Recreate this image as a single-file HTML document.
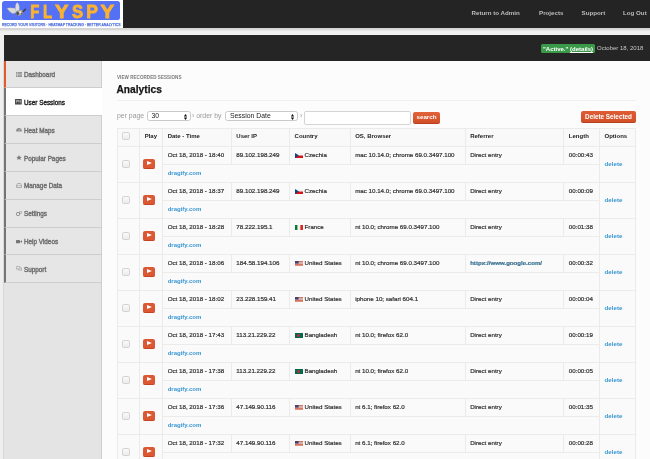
<!DOCTYPE html>
<html><head><meta charset="utf-8">
<style>
*{box-sizing:border-box}
html,body{margin:0;padding:0}
body{width:650px;height:459px;overflow:hidden;position:relative;background:#fcfcfc;font-family:"Liberation Sans",sans-serif;color:#333}
.abs{position:absolute}
#top{left:0;top:0;width:650px;height:27.5px;background:#242424}
#logobg{left:0;top:0;width:122.5px;height:27.5px;background:#fff}
#logo{left:1.5px;top:1px;width:118.5px;height:18.5px;background:#5470f4;border-radius:2.5px}
#logotxt{left:30px;top:1.5px;font-size:17.5px;font-weight:bold;color:#fab33a;letter-spacing:4.2px;line-height:18px}
#tag{left:1.9px;top:22.6px;font-size:4.1px;font-weight:normal;color:#4d6ddc;-webkit-text-stroke:0.25px #4d6ddc;white-space:nowrap;line-height:4px;transform:scaleX(0.852);transform-origin:0 0}
.nav{top:9px;font-size:6.2px;font-weight:bold;color:#bdbdbd;white-space:nowrap;line-height:8px}
#band{left:0;top:27.5px;width:650px;height:7.5px;background:linear-gradient(#d3d3d3 0,#d9d9d9 28%,#eeeeee 40%,#f3f3f3 100%)}
#lstrip{left:0;top:35px;width:4px;height:424px;background:#efefef}
#dark{left:4px;top:35px;width:646px;height:25.5px;background:#252525}
#badge{left:541px;top:43.8px;width:54px;height:9px;background:#3b9a49;border-radius:1.5px;color:#fff;font-size:6px;font-weight:bold;line-height:10.3px;padding-left:2px;white-space:nowrap}
#badge u{text-decoration:underline}
#date{left:597px;top:43.5px;font-size:6px;color:#c8c8c8;white-space:nowrap;line-height:8px}
#side{left:3px;top:60.5px;width:99px;height:400px;background:#e4e4e4;border-right:1px solid #cfcfcf;border-left:1px solid #d9d9d9}
.it{position:absolute;left:4px;width:98px;height:27.85px;background:#e6e6e6;border-bottom:1px solid #cdcdcd;border-right:1px solid #cfcfcf;border-left:2px solid #757575}
.it .tx{position:absolute;left:18px;top:10.6px;font-size:6.35px;font-weight:normal;color:#6f6f6f;-webkit-text-stroke:0.4px #707070;white-space:nowrap;line-height:8px}
.it.act{background:#fff;border-right:none}
.it.act .tx{color:#222;-webkit-text-stroke:0.35px #222}
.it.dash{border-left-color:#e05a2e}
.ic{position:absolute;left:10px;top:11px;width:6px;height:5px}
#view{left:117px;top:75.3px;font-size:4.55px;font-weight:bold;color:#7a7a7a;white-space:nowrap;line-height:5px;letter-spacing:0.05px}
#h1{left:116.5px;top:83.4px;font-size:10.2px;font-weight:bold;color:#151515;-webkit-text-stroke:0.25px #151515;white-space:nowrap;line-height:14px}
#hr{left:117px;top:100px;width:519px;height:1px;background:#f0f0f0}
.lbl{top:112px;font-size:6.9px;color:#9a9a9a;white-space:nowrap;line-height:8px}
.sel{top:111px;height:10px;border:1px solid #c9c9c9;border-radius:2.5px;background:#fff;font-size:6.85px;color:#222;line-height:8.5px;padding-left:4px;white-space:nowrap}
.arr{position:absolute;right:3px;top:1.5px;width:3px;height:6px}
#inp{left:304px;top:110.5px;width:107px;height:14.5px;border:1px solid #d4d4d4;border-radius:2px;background:#fff}
#sbtn{left:413px;top:112.3px;width:27px;height:11.5px;background:linear-gradient(#e2633a,#d14f28);border-bottom:1px solid #b8401f;border-radius:2px;color:#fff;font-size:6.2px;font-weight:bold;text-align:center;line-height:10px}
#dbtn{left:581px;top:110.8px;width:55px;height:12px;background:linear-gradient(#df5c33,#d24f28);border-bottom:1px solid #b4401e;border-radius:2px;color:#fff;font-size:6.35px;font-weight:bold;text-align:center;line-height:11px;white-space:nowrap}
#tbl{position:absolute;left:116.7px;top:127.6px;width:518.1px;border-collapse:collapse;table-layout:fixed}
#tbl td,#tbl th{border:1px solid #ebebeb;padding:0 0 0 4.6px;font-size:6px;white-space:nowrap;overflow:hidden;text-align:left;vertical-align:middle}
#tbl th{height:18px;font-weight:bold;color:#222;background:#f9f9f9;padding-bottom:2.2px}
#tbl tr.m td{height:18px;color:#333;font-size:6.2px;padding-bottom:0.8px}
#tbl tr.s td{height:18px}
#tbl tbody tr:nth-child(4n+1) td,#tbl tbody tr:nth-child(4n+2) td{background:#fafafa}
#tbl tbody tr:nth-child(4n+3) td,#tbl tbody tr:nth-child(4n+4) td{background:#fafafa}
#tbl td.dom{border-top-color:#efefef}
.dt,.ip,.co,.os,.rf,.ln{-webkit-text-stroke:0.2px #2e2e2e;color:#2e2e2e}
.lnk{color:#3b97d3;font-weight:bold}
#tbl td.dt,#tbl td.ip,#tbl td.ln{font-size:6px}#tbl td.co{font-size:6.35px}#tbl td.os{font-size:6.2px}#tbl td.rf{font-size:6.55px}#tbl td.rf .lnk{font-size:6.1px}#tbl td.op{font-size:6.1px}
.cb{display:inline-block;width:7.7px;height:7.7px;border:1px solid #d3d3d3;border-radius:1.8px;background:linear-gradient(#fafafa,#ececec);margin-left:0px;vertical-align:middle}
.pl{display:inline-block;width:11.5px;height:10px;border-radius:2px;background:#dc5832;border-bottom:1.8px solid #c4421f;position:relative;vertical-align:middle;margin-left:-1.3px}
.pl:after{content:"";position:absolute;left:3.8px;top:2.1px;border-left:5px solid #fff;border-top:2.5px solid transparent;border-bottom:2.5px solid transparent}
.fl{vertical-align:-0.5px;margin-right:2px}
th .cb{display:inline-block;width:7.7px;height:7.7px;border:1px solid #d3d3d3;border-radius:1.8px;background:linear-gradient(#fafafa,#ececec);margin-left:0px;vertical-align:middle}
</style></head><body><div id="wrap" style="position:absolute;left:0;top:0;width:650px;height:459px;will-change:transform">
<div id="top" class="abs"></div>
<div id="logobg" class="abs"></div>
<div id="logo" class="abs"></div>
<svg class="abs" style="left:0;top:0" width="122" height="21" viewBox="0 0 122 21">
<path d="M7 8.2Q10 7.2 15.6 8.4L16.2 12.2Q13.5 14 12.2 13.4Q9 11.5 7 8.2Z" fill="#d9d9d6" stroke="#a5a5a5" stroke-width="0.3"/>
<path d="M17.3 2.6Q19.4 4 19.4 8.5Q19.2 11.6 17.4 11.6Q15.3 11.4 15.4 7.5Q15.6 3.2 17.3 2.6Z" fill="#dedede" stroke="#a5a5a5" stroke-width="0.3"/>
<ellipse cx="19.6" cy="12.8" rx="3.9" ry="2.6" fill="#a9a9a9" transform="rotate(-15 19.6 12.8)"/>
<ellipse cx="17.6" cy="13.4" rx="1.3" ry="1.8" fill="#4d4d4d"/>
<ellipse cx="20.4" cy="12.3" rx="1.2" ry="1" fill="#e8e8e8"/>
<ellipse cx="21.8" cy="13.6" rx="0.9" ry="1.2" fill="#666"/>
<path d="M23 11.8L25.4 9.3" stroke="#3d3d3d" stroke-width="1.5" stroke-linecap="round"/>
<path d="M14.5 14.2L11.8 17.3M16.2 14.6L15.6 17M10.5 12.2L8.2 13.4" stroke="#8c8c9c" stroke-width="0.35"/>
<g fill="#fab232" stroke="#fab232" stroke-width="4.5" font-family="Liberation Sans" font-weight="bold" font-size="100">
<text transform="translate(30.23,17.90) scale(0.1490,0.1899)">F</text>
<text transform="translate(42.93,17.90) scale(0.1495,0.1899)">L</text>
<text transform="translate(55.00,17.90) scale(0.2016,0.1899)">Y</text>
<text transform="translate(72.10,17.91) scale(0.1667,0.1901)">S</text>
<text transform="translate(86.36,17.90) scale(0.1754,0.1899)">P</text>
<text transform="translate(100.39,17.90) scale(0.2048,0.1899)">Y</text>
</g>
</svg>
<div id="tag" class="abs">RECORD YOUR VISITORS · HEATMAP TRACKING · BETTER ANALYTICS</div>
<div class="abs nav" style="left:471.5px">Return to Admin</div>
<div class="abs nav" style="left:539px">Projects</div>
<div class="abs nav" style="left:581.5px">Support</div>
<div class="abs nav" style="left:623px">Log Out</div>
<div id="band" class="abs"></div>
<div id="lstrip" class="abs"></div>
<div id="dark" class="abs"></div>
<div id="badge" class="abs">"Active." <u>(details)</u></div>
<div id="date" class="abs">October 18, 2018</div>
<div id="side" class="abs"></div>
<div class="it dash" style="top:60.50px"><svg class="ic" viewBox="0 0 6 5"><rect width="6" height="5" fill="#8a8a8a"/><path d="M0 1.2H6M0 2.5H6M0 3.8H6M1.5 0V5" stroke="#e6e6e6" stroke-width="0.45"/></svg><span class="tx">Dashboard</span></div>
<div class="it act" style="top:88.35px"><svg class="ic" style="left:9.2px;top:10.6px;width:6.7px;height:5.6px" viewBox="0 0 6.7 5.6"><rect width="6.7" height="5.6" rx="0.6" fill="#3a3a3a"/><rect x="0.8" y="0.8" width="5.1" height="4" fill="#9a9a9a"/><path d="M0.8 4.8L2.6 2.6L3.8 3.7L4.8 2.9L5.9 4.8Z" fill="#3a3a3a"/><circle cx="4.6" cy="1.7" r="0.5" fill="#3a3a3a"/></svg><span class="tx">User Sessions</span></div>
<div class="it" style="top:116.20px"><svg class="ic" viewBox="0 0 6 5"><path d="M0.3 4.5A2.8 2.8 0 1 1 5.7 4.5Z" fill="#8a8a8a"/><path d="M3 4L4 2" stroke="#e6e6e6" stroke-width="0.5"/></svg><span class="tx">Heat Maps</span></div>
<div class="it" style="top:144.05px"><svg class="ic" viewBox="0 0 6 5"><path d="M3 0L3.8 1.8L5.8 1.9L4.2 3.1L4.8 5L3 3.9L1.2 5L1.8 3.1L0.2 1.9L2.2 1.8Z" fill="#777"/></svg><span class="tx">Popular Pages</span></div>
<div class="it" style="top:171.90px"><svg class="ic" viewBox="0 0 6 5"><path d="M0.5 2.5L1.5 0.5H4.5L5.5 2.5V4.5H0.5Z" fill="none" stroke="#8a8a8a" stroke-width="0.6"/><path d="M0.5 2.7H5.5" stroke="#8a8a8a" stroke-width="0.5"/></svg><span class="tx">Manage Data</span></div>
<div class="it" style="top:199.75px"><svg class="ic" viewBox="0 0 6 5"><circle cx="2" cy="3" r="1.7" fill="none" stroke="#8a8a8a" stroke-width="0.9"/><circle cx="4.6" cy="1.4" r="1.1" fill="none" stroke="#8a8a8a" stroke-width="0.7"/></svg><span class="tx">Settings</span></div>
<div class="it" style="top:227.60px"><svg class="ic" viewBox="0 0 6 5"><rect x="0" y="1" width="4" height="3.2" rx="0.5" fill="#777"/><path d="M4 2.6L6 1.2V4L4 2.6Z" fill="#777"/></svg><span class="tx">Help Videos</span></div>
<div class="it" style="top:255.45px"><svg class="ic" viewBox="0 0 6 5"><path d="M0.4 0.5H4V2.8H1.8L0.9 3.5V2.8H0.4Z" fill="none" stroke="#8a8a8a" stroke-width="0.5"/><path d="M4.5 1.8H5.6V4H5V4.6L4.2 4H2.5V3.3" fill="none" stroke="#8a8a8a" stroke-width="0.5"/></svg><span class="tx">Support</span></div>

<div id="view" class="abs">VIEW RECORDED SESSIONS</div>
<div id="h1" class="abs">Analytics</div>
<div id="hr" class="abs"></div>
<div class="abs lbl" style="left:117px">per page</div>
<div class="abs sel" style="left:146.5px;width:44px">30<svg class="arr" viewBox="0 0 3 6"><path d="M-0.2 2.5L1.5 0L3.2 2.5ZM-0.2 3.5L1.5 6L3.2 3.5Z" fill="#111"/></svg></div>
<div class="abs lbl" style="left:192px">› order by</div>
<div class="abs sel" style="left:225px;width:73px">Session Date<svg class="arr" viewBox="0 0 3 6"><path d="M-0.2 2.5L1.5 0L3.2 2.5ZM-0.2 3.5L1.5 6L3.2 3.5Z" fill="#111"/></svg></div>
<div class="abs lbl" style="left:300px">›</div>
<div id="inp" class="abs"></div>
<div id="sbtn" class="abs">search</div>
<div id="dbtn" class="abs">Delete Selected</div>

<table id="tbl">
<colgroup><col style="width:22.4px"><col style="width:23px"><col style="width:68.7px"><col style="width:58.2px"><col style="width:60.6px"><col style="width:115px"><col style="width:98.7px"><col style="width:35.7px"><col style="width:35.8px"></colgroup>
<thead><tr><th><span class="cb"></span></th><th>Play</th><th>Date - Time</th><th>User IP</th><th>Country</th><th>OS, Browser</th><th>Referrer</th><th>Length</th><th>Options</th></tr></thead>
<tbody>
<tr class="m"><td class="c1" rowspan="2"><span class="cb"></span></td><td class="c2" rowspan="2"><span class="pl"></span></td><td class="dt">Oct 18, 2018 - 18:40</td><td class="ip">89.102.198.249</td><td class="co"><svg class="fl" width="8" height="5" viewBox="0 0 8 5"><rect width="8" height="2.5" fill="#f4f4f4"/><rect y="2.5" width="8" height="2.5" fill="#d7141a"/><path d="M0 0L4 2.5L0 5Z" fill="#11457e"/></svg>Czechia</td><td class="os">mac 10.14.0; chrome 69.0.3497.100</td><td class="rf">Direct entry</td><td class="ln">00:00:43</td><td class="op" rowspan="2"><span class="lnk">delete</span></td></tr>
<tr class="s"><td colspan="6" class="dom"><span class="lnk">dragify.com</span></td></tr>
<tr class="m"><td class="c1" rowspan="2"><span class="cb"></span></td><td class="c2" rowspan="2"><span class="pl"></span></td><td class="dt">Oct 18, 2018 - 18:37</td><td class="ip">89.102.198.249</td><td class="co"><svg class="fl" width="8" height="5" viewBox="0 0 8 5"><rect width="8" height="2.5" fill="#f4f4f4"/><rect y="2.5" width="8" height="2.5" fill="#d7141a"/><path d="M0 0L4 2.5L0 5Z" fill="#11457e"/></svg>Czechia</td><td class="os">mac 10.14.0; chrome 69.0.3497.100</td><td class="rf">Direct entry</td><td class="ln">00:00:09</td><td class="op" rowspan="2"><span class="lnk">delete</span></td></tr>
<tr class="s"><td colspan="6" class="dom"><span class="lnk">dragify.com</span></td></tr>
<tr class="m"><td class="c1" rowspan="2"><span class="cb"></span></td><td class="c2" rowspan="2"><span class="pl"></span></td><td class="dt">Oct 18, 2018 - 18:28</td><td class="ip">78.222.195.1</td><td class="co"><svg class="fl" width="8" height="5" viewBox="0 0 8 5"><rect width="2.67" height="5" fill="#0a7a3a"/><rect x="2.67" width="2.67" height="5" fill="#f4f4f4"/><rect x="5.33" width="2.67" height="5" fill="#d52b1e"/></svg>France</td><td class="os">nt 10.0; chrome 69.0.3497.100</td><td class="rf">Direct entry</td><td class="ln">00:01:38</td><td class="op" rowspan="2"><span class="lnk">delete</span></td></tr>
<tr class="s"><td colspan="6" class="dom"><span class="lnk">dragify.com</span></td></tr>
<tr class="m"><td class="c1" rowspan="2"><span class="cb"></span></td><td class="c2" rowspan="2"><span class="pl"></span></td><td class="dt">Oct 18, 2018 - 18:06</td><td class="ip">184.58.194.106</td><td class="co"><svg class="fl" width="8" height="5" viewBox="0 0 8 5"><rect width="8" height="5" fill="#e8e8e8"/><rect y="0" width="8" height="0.8" fill="#d2553f"/><rect y="1.6" width="8" height="0.8" fill="#d2553f"/><rect y="3.2" width="8" height="0.8" fill="#d2553f"/><rect y="4.4" width="8" height="0.6" fill="#d2553f"/><rect width="3.6" height="2.6" fill="#3f4676"/></svg>United States</td><td class="os">nt 10.0; chrome 69.0.3497.100</td><td class="rf"><span class="lnk">https://www.google.com/</span></td><td class="ln">00:00:32</td><td class="op" rowspan="2"><span class="lnk">delete</span></td></tr>
<tr class="s"><td colspan="6" class="dom"><span class="lnk">dragify.com</span></td></tr>
<tr class="m"><td class="c1" rowspan="2"><span class="cb"></span></td><td class="c2" rowspan="2"><span class="pl"></span></td><td class="dt">Oct 18, 2018 - 18:02</td><td class="ip">23.228.159.41</td><td class="co"><svg class="fl" width="8" height="5" viewBox="0 0 8 5"><rect width="8" height="5" fill="#e8e8e8"/><rect y="0" width="8" height="0.8" fill="#d2553f"/><rect y="1.6" width="8" height="0.8" fill="#d2553f"/><rect y="3.2" width="8" height="0.8" fill="#d2553f"/><rect y="4.4" width="8" height="0.6" fill="#d2553f"/><rect width="3.6" height="2.6" fill="#3f4676"/></svg>United States</td><td class="os">iphone 10; safari 604.1</td><td class="rf">Direct entry</td><td class="ln">00:00:04</td><td class="op" rowspan="2"><span class="lnk">delete</span></td></tr>
<tr class="s"><td colspan="6" class="dom"><span class="lnk">dragify.com</span></td></tr>
<tr class="m"><td class="c1" rowspan="2"><span class="cb"></span></td><td class="c2" rowspan="2"><span class="pl"></span></td><td class="dt">Oct 18, 2018 - 17:43</td><td class="ip">113.21.229.22</td><td class="co"><svg class="fl" width="8" height="5" viewBox="0 0 8 5"><rect width="8" height="5" fill="#006a4e"/><circle cx="3.5" cy="2.5" r="1.5" fill="#c42b35"/></svg>Bangladesh</td><td class="os">nt 10.0; firefox 62.0</td><td class="rf">Direct entry</td><td class="ln">00:00:19</td><td class="op" rowspan="2"><span class="lnk">delete</span></td></tr>
<tr class="s"><td colspan="6" class="dom"><span class="lnk">dragify.com</span></td></tr>
<tr class="m"><td class="c1" rowspan="2"><span class="cb"></span></td><td class="c2" rowspan="2"><span class="pl"></span></td><td class="dt">Oct 18, 2018 - 17:38</td><td class="ip">113.21.229.22</td><td class="co"><svg class="fl" width="8" height="5" viewBox="0 0 8 5"><rect width="8" height="5" fill="#006a4e"/><circle cx="3.5" cy="2.5" r="1.5" fill="#c42b35"/></svg>Bangladesh</td><td class="os">nt 10.0; firefox 62.0</td><td class="rf">Direct entry</td><td class="ln">00:00:05</td><td class="op" rowspan="2"><span class="lnk">delete</span></td></tr>
<tr class="s"><td colspan="6" class="dom"><span class="lnk">dragify.com</span></td></tr>
<tr class="m"><td class="c1" rowspan="2"><span class="cb"></span></td><td class="c2" rowspan="2"><span class="pl"></span></td><td class="dt">Oct 18, 2018 - 17:36</td><td class="ip">47.149.90.116</td><td class="co"><svg class="fl" width="8" height="5" viewBox="0 0 8 5"><rect width="8" height="5" fill="#e8e8e8"/><rect y="0" width="8" height="0.8" fill="#d2553f"/><rect y="1.6" width="8" height="0.8" fill="#d2553f"/><rect y="3.2" width="8" height="0.8" fill="#d2553f"/><rect y="4.4" width="8" height="0.6" fill="#d2553f"/><rect width="3.6" height="2.6" fill="#3f4676"/></svg>United States</td><td class="os">nt 6.1; firefox 62.0</td><td class="rf">Direct entry</td><td class="ln">00:01:35</td><td class="op" rowspan="2"><span class="lnk">delete</span></td></tr>
<tr class="s"><td colspan="6" class="dom"><span class="lnk">dragify.com</span></td></tr>
<tr class="m"><td class="c1" rowspan="2"><span class="cb"></span></td><td class="c2" rowspan="2"><span class="pl"></span></td><td class="dt">Oct 18, 2018 - 17:32</td><td class="ip">47.149.90.116</td><td class="co"><svg class="fl" width="8" height="5" viewBox="0 0 8 5"><rect width="8" height="5" fill="#e8e8e8"/><rect y="0" width="8" height="0.8" fill="#d2553f"/><rect y="1.6" width="8" height="0.8" fill="#d2553f"/><rect y="3.2" width="8" height="0.8" fill="#d2553f"/><rect y="4.4" width="8" height="0.6" fill="#d2553f"/><rect width="3.6" height="2.6" fill="#3f4676"/></svg>United States</td><td class="os">nt 6.1; firefox 62.0</td><td class="rf">Direct entry</td><td class="ln">00:00:28</td><td class="op" rowspan="2"><span class="lnk">delete</span></td></tr>
<tr class="s"><td colspan="6" class="dom"><span class="lnk">dragify.com</span></td></tr>
</tbody></table>
</div></body></html>
